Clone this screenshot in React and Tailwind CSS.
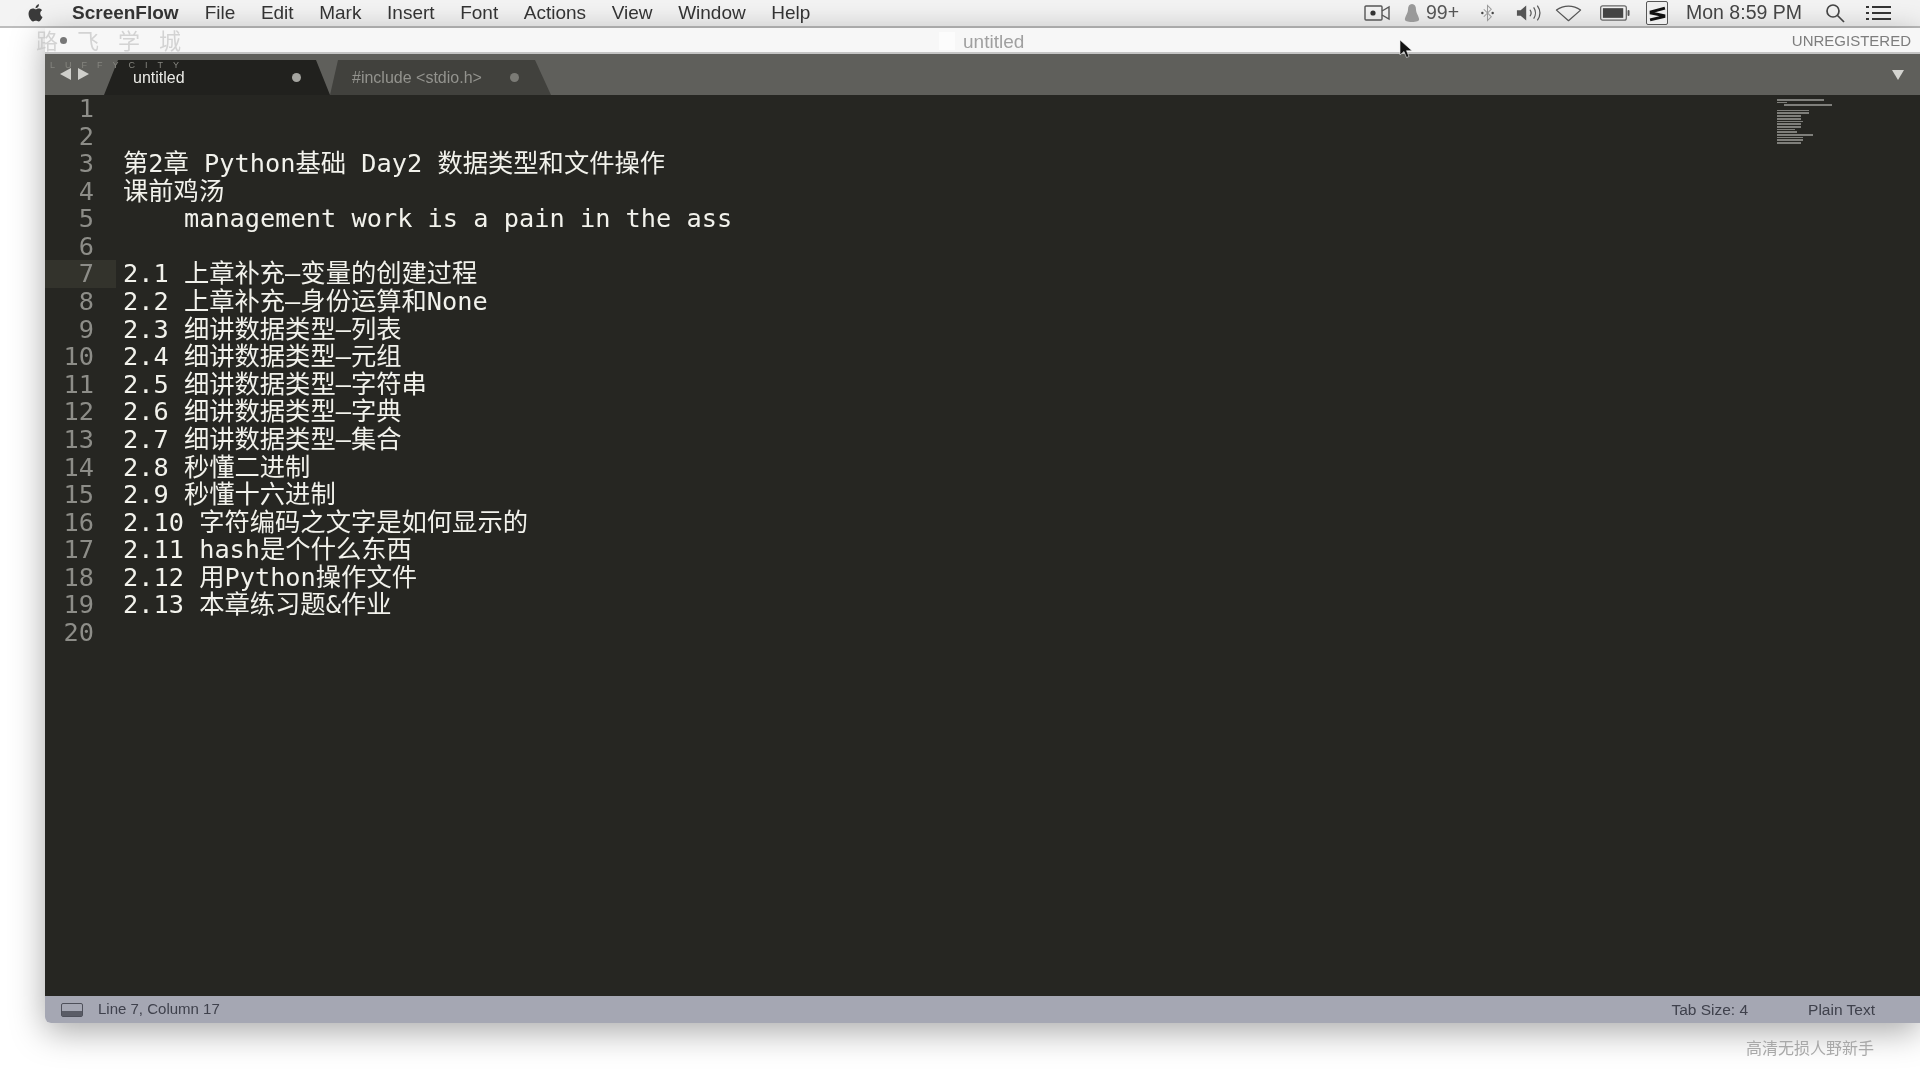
import React from 'react';

const menus = ['File', 'Edit', 'Mark', 'Insert', 'Font', 'Actions', 'View', 'Window', 'Help'];

const lines = [
  '',
  '',
  '第2章 Python基础 Day2 数据类型和文件操作',
  '课前鸡汤',
  '    management work is a pain in the ass',
  '',
  '2.1 上章补充–变量的创建过程',
  '2.2 上章补充–身份运算和None',
  '2.3 细讲数据类型–列表',
  '2.4 细讲数据类型–元组',
  '2.5 细讲数据类型–字符串',
  '2.6 细讲数据类型–字典',
  '2.7 细讲数据类型–集合',
  '2.8 秒懂二进制',
  '2.9 秒懂十六进制',
  '2.10 字符编码之文字是如何显示的',
  '2.11 hash是个什么东西',
  '2.12 用Python操作文件',
  '2.13 本章练习题&作业',
  '',
];

// minimap rows: [indent, width]
const minimap = [
  [0, 47], [0, 10], [7, 48], [0, 0], [0, 32], [0, 32], [0, 24], [0, 24], [0, 26],
  [0, 24], [0, 24], [0, 18], [0, 20], [0, 36], [0, 26], [0, 26], [0, 24],
];

function AppleLogo() {
  return (
    <svg viewBox="0 0 24 24" className="w-[20px] h-[22px]" fill="#3a3a3a">
      <path d="M17.05 12.54c-.03-2.6 2.12-3.85 2.22-3.91-1.21-1.77-3.09-2.01-3.76-2.04-1.6-.16-3.12.94-3.93.94-.81 0-2.06-.92-3.39-.89-1.74.03-3.35 1.01-4.25 2.57-1.81 3.14-.46 7.8 1.3 10.35.86 1.25 1.89 2.65 3.24 2.6 1.3-.05 1.79-.84 3.36-.84s2.01.84 3.39.81c1.4-.02 2.28-1.27 3.14-2.53.99-1.45 1.4-2.85 1.42-2.93-.03-.01-2.71-1.04-2.74-4.13zM14.47 4.9c.72-.87 1.2-2.08 1.07-3.28-1.03.04-2.28.69-3.02 1.55-.66.77-1.24 2-1.09 3.18 1.15.09 2.33-.58 3.04-1.45z" />
    </svg>
  );
}

function CameraIcon() {
  return (
    <svg viewBox="0 0 27 18" className="w-[27px] h-[18px]" fill="none" stroke="#555" strokeWidth="1.4">
      <rect x="1" y="2" width="17" height="14" rx="1" />
      <circle cx="9" cy="9" r="2.6" fill="#333" stroke="none" />
      <path d="M18 7l7-4v12l-7-4" />
    </svg>
  );
}

function BellIcon() {
  return (
    <svg viewBox="0 0 18 20" className="w-[16px] h-[20px]" fill="#999">
      <path d="M9 0c3 0 4.5 2.5 4.5 6 0 4 3.5 8 3.5 11 0 2-3 3-8 3s-8-1-8-3c0-3 3.5-7 3.5-11C4.5 2.5 6 0 9 0z" />
    </svg>
  );
}

function BluetoothIcon() {
  return (
    <svg viewBox="0 0 16 18" className="w-[15px] h-[18px]" fill="none" stroke="#999" strokeWidth="1.1">
      <path d="M4 5l8 8-4 4V1l4 4-8 8" />
      <circle cx="2.5" cy="9" r="1.3" fill="#444" stroke="none" />
      <circle cx="13.5" cy="9" r="1.3" fill="#444" stroke="none" />
    </svg>
  );
}

function VolumeIcon() {
  return (
    <svg viewBox="0 0 28 18" className="w-[26px] h-[18px]" fill="none" stroke="#555" strokeWidth="1.3">
      <path d="M1 6h4l6-5v16l-6-5H1z" fill="#555" stroke="none" />
      <path d="M15 5.5c1.5 2 1.5 5 0 7M19 3c2.5 3.5 2.5 8.5 0 12M23 1c3.5 5 3.5 11 0 16" />
    </svg>
  );
}

function WifiIcon() {
  return (
    <svg viewBox="0 0 28 18" className="w-[27px] h-[18px]" fill="none" stroke="#555" strokeWidth="1.3">
      <path d="M1.5 6C9 .5 19 .5 26.5 6L14 17z" strokeLinejoin="round" />
    </svg>
  );
}

function BatteryIcon() {
  return (
    <svg viewBox="0 0 31 16" className="w-[30px] h-[16px]">
      <rect x="0.7" y="0.7" width="26.5" height="14.6" rx="2" fill="none" stroke="#666" strokeWidth="1.3" />
      <rect x="3" y="3" width="21" height="10" fill="#444" />
      <rect x="28.5" y="5" width="2" height="6" rx="1" fill="#555" />
    </svg>
  );
}

function SublimeIcon() {
  return (
    <div className="w-[22px] h-[24px] border border-[#555] rounded-[2px] bg-[#eee] flex items-center justify-center">
      <svg viewBox="0 0 16 16" className="w-[17px] h-[17px]" fill="none" stroke="#111" strokeWidth="2.8">
        <path d="M15 3L2 6.5v1L14 10v1L1 14" />
      </svg>
    </div>
  );
}

function SearchIcon() {
  return (
    <svg viewBox="0 0 20 20" className="w-[20px] h-[20px]" fill="none" stroke="#444" strokeWidth="1.7">
      <circle cx="8" cy="8" r="6" />
      <path d="M12.5 12.5L19 19" />
    </svg>
  );
}

function ListIcon() {
  return (
    <svg viewBox="0 0 25 16" className="w-[25px] h-[16px]" stroke="#333" strokeWidth="1.8">
      <path d="M6 2h19M6 8h19M6 14h19" />
      <path d="M0 2h3M0 8h3M0 14h3" />
    </svg>
  );
}

function Cursor() {
  return (
    <svg viewBox="0 0 14 20" className="absolute left-[1399px] top-[40px] w-[14px] h-[20px]">
      <path d="M1 0v15l4-3.5 2.5 6 2.5-1-2.5-5.8H13z" fill="#111" stroke="#eee" strokeWidth="0.6" />
    </svg>
  );
}

function Tab({ title, active, width, shape, pad, dotPad }) {
  return (
    <div className="relative h-[35px] flex items-center" style={{ width, paddingLeft: pad, paddingRight: dotPad }}>
      <svg viewBox={`0 0 ${width} 35`} className="absolute inset-0 w-full h-full">
        <path d={shape} fill={active ? '#21211e' : '#41413d'} />
      </svg>
      <span className={`relative text-[16px] flex-1 truncate ${active ? 'text-[#ecece8]' : 'text-[#93938e]'}`}>{title}</span>
      <span className={`relative w-[9px] h-[9px] rounded-full ${active ? 'bg-[#a5a5a0]' : 'bg-[#7b7b76]'}`} />
    </div>
  );
}

export default function App() {
  return (
    <div className="relative w-[1920px] h-[1080px] overflow-hidden bg-white font-['Liberation_Sans',sans-serif] blur-[0.6px]">
      {/* menu bar */}
      <div className="h-[28px] bg-[#f3f3f3] border-b-2 border-[#bdbdbd] flex items-center pl-[26px] pr-[29px] text-[19px] text-[#333]">
        <AppleLogo />
        <span className="ml-[26px] mr-[26px] font-bold">ScreenFlow</span>
        <div className="flex gap-[25.6px]">
          {menus.map((m) => (
            <span key={m}>{m}</span>
          ))}
        </div>
        <div className="ml-auto flex items-center text-[#444]">
          <CameraIcon />
          <div className="ml-[13px] flex items-center gap-[6px] text-[#555]">
            <BellIcon />
            <span className="text-[19.5px]">99+</span>
          </div>
          <div className="ml-[21px]"><BluetoothIcon /></div>
          <div className="ml-[21px]"><VolumeIcon /></div>
          <div className="ml-[13px]"><WifiIcon /></div>
          <div className="ml-[18px]"><BatteryIcon /></div>
          <div className="ml-[16px]"><SublimeIcon /></div>
          <span className="ml-[18px] text-[19.5px]">Mon 8:59 PM</span>
          <div className="ml-[23px]"><SearchIcon /></div>
          <div className="ml-[21px]"><ListIcon /></div>
        </div>
      </div>

      {/* window, inset from the left with a soft shadow */}
      <div className="ml-[45px] h-[995px] rounded-b-[6px] shadow-[0_8px_34px_rgba(0,0,0,0.35)] flex flex-col">
        <div className="relative h-[26px] bg-[#f7f7f7] border-b-2 border-[#c4c4c4] flex items-center justify-end pt-[2px] pr-[9px] shrink-0">
          <div className="absolute left-[894px] top-[4px] w-[16px] h-[18px] bg-[#fcfcfc]" />
          <span className="absolute left-[918px] top-0 text-[19px] text-[#a0a0a0]">untitled</span>
          <span className="text-[15px] text-[#7d7d7d]">UNREGISTERED</span>
        </div>

        <div className="h-[41px] bg-[#5f5f5b] flex items-end pl-[59px] pr-[16px] shrink-0 relative">
          <div className="absolute left-[15px] top-[14px] flex gap-[7px]">
            <div className="w-0 h-0 border-y-[6px] border-y-transparent border-r-[11px] border-r-[#cfcfcb]" />
            <div className="w-0 h-0 border-y-[6px] border-y-transparent border-l-[11px] border-l-[#cfcfcb]" />
          </div>
          <Tab title="untitled" active width={226} shape="M0 35L14 0H212L226 35z" pad={29} dotPad={29} />
          <Tab title="#include <stdio.h>" width={221} shape="M0 35L8 0H205L221 35z" pad={22} dotPad={32} />
          <div className="ml-auto mb-[15px] w-0 h-0 border-x-[6px] border-x-transparent border-t-[10px] border-t-[#d4d4d0]" />
        </div>

        <div className="relative flex-1 bg-[#262622] font-['DejaVu_Sans_Mono','Noto_Sans_CJK_SC',monospace] text-[25.3px] leading-[27.58px] overflow-hidden">
          {lines.map((text, i) => (
            <div key={i} className="flex h-[27.58px] whitespace-pre">
              <div className={`w-[71px] shrink-0 pr-[22px] text-right text-[#8d8d88] ${i === 6 ? 'bg-[#33332c]' : ''}`}>{i + 1}</div>
              <div className="pl-[7px] text-[#f2f2ec]">{text}</div>
            </div>
          ))}
          {/* minimap */}
          <div className="absolute left-[1732px] top-[4px] flex flex-col gap-[1px] opacity-50 blur-[0.5px]">
            {minimap.map(([indent, w], i) => (
              <div key={i} className="h-[1.7px] bg-[#d8d8d4]" style={{ width: w, marginLeft: indent }} />
            ))}
          </div>
        </div>

        <div className="h-[27px] bg-[#a5a7b3] rounded-bl-[6px] flex items-center pl-[16px] pr-[45px] text-[15.5px] text-[#3f414c] shrink-0">
          <div className="w-[22px] h-[14px] rounded-[2px] border border-[#4e505a] flex flex-col justify-end">
            <div className="h-[5px] bg-[#5a5c66]" />
          </div>
          <span className="ml-[15px] text-[15px]">Line 7, Column 17</span>
          <span className="ml-auto">Tab Size: 4</span>
          <span className="ml-[60px]">Plain Text</span>
        </div>
      </div>

      <Cursor />

      {/* faint video watermarks */}
      <div className="absolute left-[36px] top-[26px] font-['Noto_Sans_CJK_SC',sans-serif] text-[22px] leading-[26px] tracking-[19px] text-[#c4c4c4] opacity-70">路飞学城</div>
      <div className="absolute left-[60px] top-[37px] w-[7px] h-[7px] rounded-full bg-[#777]" />
      <div className="absolute left-[50px] top-[60px] font-['Liberation_Sans',sans-serif] text-[9px] leading-[10px] tracking-[10px] text-[#85857f]">LUFFYCITY</div>
      <div className="absolute left-[1746px] top-[1035px] font-['Noto_Sans_CJK_SC',sans-serif] text-[16px] text-[#a8a8a8]">高清无损人野新手</div>
    </div>
  );
}
